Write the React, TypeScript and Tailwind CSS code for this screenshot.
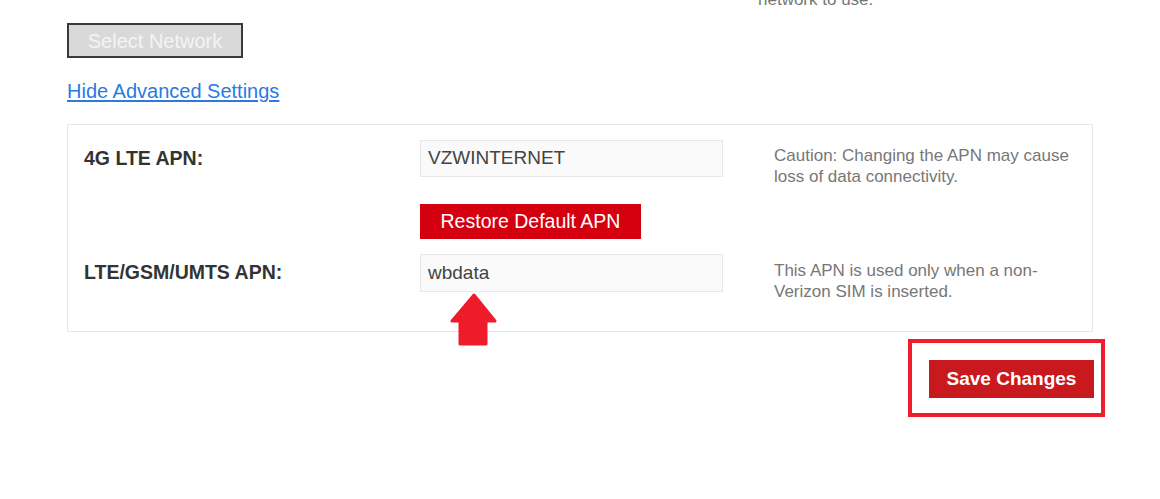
import React from "react"

const font = { fontFamily: '"Liberation Sans", Arial, sans-serif' }

function UpArrow() {
  return (
    <svg width="48" height="54" viewBox="0 0 48 54" className="block">
      <polygon
        points="24,2 2,28 10,28 10,51 36,51 36,28 45,28"
        fill="#ee1c2a"
        stroke="#ee1c2a"
        strokeWidth="3"
        strokeLinejoin="round"
      />
    </svg>
  )
}

export default function App() {
  return (
    <div className="w-[1160px] h-[499px] bg-white overflow-hidden pl-[67px]" style={font}>
      {/* tail of the previous row's help text */}
      <p className="ml-[691px] -mt-[11px] h-[21px] text-[17px] leading-[21px] text-[#777]">
        network to use.
      </p>

      <button className="mt-[13px] w-[176px] h-[35px] border-2 border-[#3a3a3a] bg-[#d9d9d9] text-[20px] text-[#f4f4f4] flex items-center justify-center">
        Select Network
      </button>

      <a href="#" className="block w-fit mt-[21px] text-[20px] leading-[24px] text-[#2a7ae2] underline underline-offset-2">
        Hide Advanced Settings
      </a>

      {/* advanced settings panel */}
      <div className="mt-[21px] w-[1026px] border border-[#e6e6e6] pl-[16px] pt-[15px] pb-[39px]">
        <div className="flex items-start h-[37px]">
          <div className="w-[336px] h-[38px] flex items-center text-[19.5px] font-bold text-[#333]">4G LTE APN:</div>
          <div className="w-[303px] h-[37px] border border-[#e8e8e8] bg-[#fafafa] pl-[7px] flex items-center text-[19px] text-[#444]">
            VZWINTERNET
          </div>
          <p className="ml-[51px] mt-[5px] w-[305px] text-[17px] leading-[21px] text-[#777]">
            Caution: Changing the APN may cause loss of data connectivity.
          </p>
        </div>

        <button className="ml-[336px] mt-[27px] w-[221px] h-[35px] bg-[#d40010] text-white text-[19.5px] flex items-center justify-center">
          Restore Default APN
        </button>

        <div className="flex items-start h-[38px] mt-[15px]">
          <div className="w-[336px] h-[38px] flex items-center text-[19.5px] font-bold text-[#333]">LTE/GSM/UMTS APN:</div>
          <div className="relative w-[303px] h-[38px] border border-[#e8e8e8] bg-[#fafafa] pl-[7px] flex items-center text-[19px] text-[#444]">
            wbdata
            <div className="absolute left-[29px] top-[38px]">
              <UpArrow />
            </div>
          </div>
          <p className="ml-[51px] mt-[6px] w-[305px] text-[17px] leading-[21px] text-[#777]">
            This APN is used only when a non-Verizon SIM is inserted.
          </p>
        </div>
      </div>

      {/* save, with the highlight frame */}
      <div className="w-[1038px] mt-[7px] flex justify-end">
        <div className="border-4 border-[#ee1c2e] pl-[17px] pr-[7px] pt-[17px] pb-[15px]">
          <button className="w-[165px] h-[38px] bg-[#c8191e] text-white text-[19px] font-bold flex items-center justify-center">
            Save Changes
          </button>
        </div>
      </div>
    </div>
  )
}
